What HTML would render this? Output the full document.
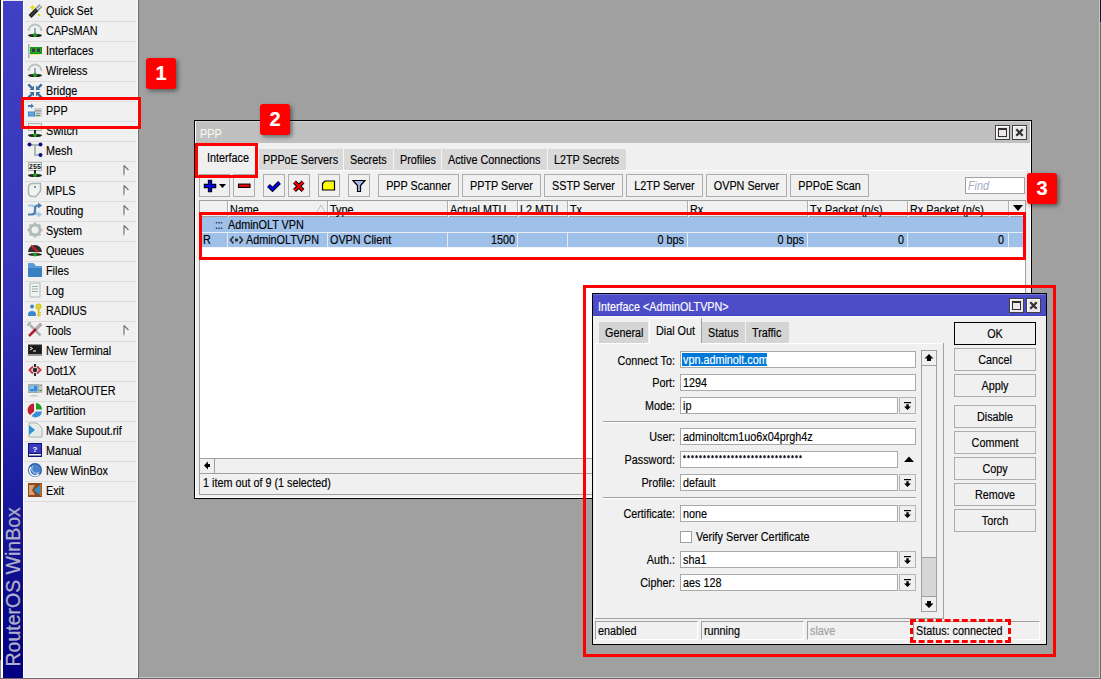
<!DOCTYPE html><html><head><meta charset="utf-8"><style>
*{box-sizing:border-box;margin:0;padding:0}
html,body{width:1101px;height:679px;overflow:hidden;background:#a0a0a0}
body{position:relative;font-family:"Liberation Sans", sans-serif;font-size:12px;color:#000;letter-spacing:0px;-webkit-text-stroke:0.15px currentColor}
.a{position:absolute}
.t{position:absolute;white-space:nowrap;line-height:13px;transform:scaleX(0.9);transform-origin:0 0}
.tr{transform-origin:100% 0}
.btn{position:absolute;background:#f0f0f0;border:1px solid #adadad}
.bt{position:absolute;left:0;right:0;text-align:center;white-space:nowrap;line-height:13px;transform:scaleX(0.9)}
.fld{position:absolute;background:#fff;border:1px solid #a9a9a9}
.dd{position:absolute;background:#f0f0f0;border:1px solid #b4b4b4}
.red{position:absolute;border:3px solid #ff0000}
.badge{position:absolute;width:30px;height:31px;background:#ff0000;border-radius:3px;box-shadow:2px 2px 4px rgba(0,0,0,0.45);color:#fff;font-weight:bold;font-size:20px;text-align:center;line-height:31px}
</style></head><body>
<div class="a" style="left:0;top:0;width:1px;height:679px;background:#181818"></div>
<div class="a" style="left:0;top:660px;width:1px;height:19px;background:#808080"></div>
<div class="a" style="left:1px;top:0;width:2px;height:678px;background:#fffff8"></div>
<div class="a" style="left:3px;top:1px;width:20px;height:677px;background:linear-gradient(#4040c4,#3434b8 45%,#000080)"></div>
<div class="a" style="left:3px;top:0;width:20px;height:1px;background:#e8e8f0"></div>
<div class="a" style="left:23px;top:0;width:1px;height:678px;background:#fffff8"></div>
<div class="a" style="left:24px;top:0;width:113px;height:678px;background:#f0f0f0"></div>
<div class="a" style="left:137px;top:0;width:1px;height:678px;background:#fafafa"></div>
<div class="a" style="left:138px;top:0;width:1px;height:679px;background:#6e6e6e"></div>
<div class="a" style="left:24px;top:677px;width:113px;height:1px;background:#fafafa"></div>
<div class="a" style="left:139px;top:677px;width:961px;height:1px;background:#c4c4c4"></div>
<div class="a" style="left:1099px;top:0;width:1px;height:678px;background:#c4c4c4"></div>
<div class="a" style="left:1100px;top:0;width:1px;height:679px;background:#6a6a6a"></div>
<div class="a" style="left:1100px;top:0;width:1px;height:22px;background:#16162a"></div>
<div class="a" style="left:0;top:678px;width:1101px;height:1px;background:#6a6a6a"></div>
<svg style="position:absolute;left:0px;top:0px;" width="24" height="679" viewBox="0 0 24 679"><text transform="translate(19.8,666.5) rotate(-90)" font-family="Liberation Sans" font-size="19.5" fill="#000030" opacity="0.6" x="0" y="1.5">RouterOS WinBox</text><text transform="translate(19.8,666.5) rotate(-90)" font-family="Liberation Sans" font-size="19.5" fill="#b0b0d0" stroke="#b0b0d0" stroke-width="0.3">RouterOS WinBox</text></svg>
<div class="a" style="left:25px;top:21px;width:111px;height:1px;background:#dcdcdc"></div>
<svg style="position:absolute;left:27px;top:2px;" width="16" height="16" viewBox="0 0 16 16"><path d="M3 14.5L10 7.5" stroke="#202020" stroke-width="4"/><path d="M3 14.5L10 7.5" stroke="#404040" stroke-width="1.5"/>
<path d="M10 7.5L13.8 3.7" stroke="#8a8a8a" stroke-width="4"/><path d="M10 7.5L13.8 3.7" stroke="#d8d8d8" stroke-width="1.6"/>
<path d="M5.5 2.5l1 2 2 1-2 1-1 2-1-2-2-1 2-1z" fill="#e0dc10"/>
<rect x="11" y="12" width="2.2" height="2.2" fill="#e0dc10"/></svg>
<div class="t" style="left:46px;top:5px">Quick Set</div>
<div class="a" style="left:25px;top:41px;width:111px;height:1px;background:#dcdcdc"></div>
<svg style="position:absolute;left:27px;top:22px;" width="16" height="16" viewBox="0 0 16 16"><path d="M1.5 9 A6.5 6.5 0 0 1 14.5 9" fill="none" stroke="#b8c4c0" stroke-width="2"/>
<rect x="7" y="6" width="2" height="7" fill="#9aaaa6"/>
<ellipse cx="8" cy="13.5" rx="7" ry="1.6" fill="#222"/>
<circle cx="8" cy="13" r="2" fill="#20a020"/></svg>
<div class="t" style="left:46px;top:25px">CAPsMAN</div>
<div class="a" style="left:25px;top:61px;width:111px;height:1px;background:#dcdcdc"></div>
<svg style="position:absolute;left:27px;top:42px;" width="16" height="16" viewBox="0 0 16 16"><rect x="1" y="2" width="1.6" height="14" fill="#a4b0ac"/>
<rect x="3" y="5" width="12" height="7" fill="#109010"/><rect x="3.5" y="5.5" width="11" height="6" fill="#20a820"/>
<rect x="5" y="6.5" width="3" height="3.5" fill="#383848"/><rect x="10" y="6.5" width="3" height="3.5" fill="#383848"/>
<path d="M4 12.5H14" stroke="#e8d820" stroke-width="1.2" stroke-dasharray="1 1"/></svg>
<div class="t" style="left:46px;top:45px">Interfaces</div>
<div class="a" style="left:25px;top:81px;width:111px;height:1px;background:#dcdcdc"></div>
<svg style="position:absolute;left:27px;top:62px;" width="16" height="16" viewBox="0 0 16 16"><path d="M1.5 9 A6.5 6.5 0 0 1 14.5 9" fill="none" stroke="#b8c4c0" stroke-width="2"/>
<rect x="7" y="6" width="2" height="7" fill="#9aaaa6"/>
<ellipse cx="8" cy="13.5" rx="7" ry="1.6" fill="#222"/>
<circle cx="8" cy="13" r="2" fill="#20a020"/></svg>
<div class="t" style="left:46px;top:65px">Wireless</div>
<div class="a" style="left:25px;top:101px;width:111px;height:1px;background:#dcdcdc"></div>
<svg style="position:absolute;left:27px;top:82px;" width="16" height="16" viewBox="0 0 16 16"><g fill="#3a6e9e"><path d="M7 8V3.5L2.5 8z"/><path d="M9 8V3.5L13.5 8z"/><path d="M7 10V14.5L2.5 10z"/><path d="M9 10V14.5L13.5 10z"/></g>
<g stroke="#3a6e9e" stroke-width="2.4"><path d="M1.3 2.3L5 6M14.7 2.3L11 6M1.3 15.7L5 12M14.7 15.7L11 12"/></g></svg>
<div class="t" style="left:46px;top:85px">Bridge</div>
<div class="a" style="left:25px;top:121px;width:111px;height:1px;background:#dcdcdc"></div>
<svg style="position:absolute;left:27px;top:102px;" width="16" height="16" viewBox="0 0 16 16"><path d="M1 4h4" stroke="#4a7eb0" stroke-width="2"/><path d="M4 1.5l3 2.5-3 2.5z" fill="#4a7eb0"/>
<rect x="7" y="6" width="8" height="9" fill="#cfcfcf"/><rect x="8" y="8" width="6" height="1.5" fill="#a0a0a0"/>
<rect x="9" y="11" width="4" height="1" fill="#a0a0a0"/><rect x="9" y="13" width="4" height="1" fill="#20b020"/>
<rect x="1" y="9.5" width="7" height="5" fill="#3a88d0"/><rect x="2" y="10.5" width="5" height="3" fill="#6aa8e0"/></svg>
<div class="t" style="left:46px;top:105px">PPP</div>
<div class="a" style="left:25px;top:141px;width:111px;height:1px;background:#dcdcdc"></div>
<svg style="position:absolute;left:27px;top:122px;" width="16" height="16" viewBox="0 0 16 16"><rect x="1.5" y="1.5" width="13" height="7" fill="#e8eeec" stroke="#a8b4b0"/>
<rect x="7" y="8" width="2" height="5" fill="#222"/>
<ellipse cx="8" cy="13.5" rx="7" ry="1.6" fill="#222"/>
<circle cx="8" cy="13" r="2" fill="#20a020"/></svg>
<div class="t" style="left:46px;top:125px">Switch</div>
<div class="a" style="left:25px;top:161px;width:111px;height:1px;background:#dcdcdc"></div>
<svg style="position:absolute;left:27px;top:142px;" width="16" height="16" viewBox="0 0 16 16"><path d="M3 3H13M8 3V13H13" fill="none" stroke="#a8b8b4" stroke-width="2"/>
<circle cx="2.5" cy="2.5" r="2" fill="#101080"/><circle cx="13.5" cy="2.5" r="2" fill="#101080"/><circle cx="13.5" cy="13" r="2" fill="#101080"/></svg>
<div class="t" style="left:46px;top:145px">Mesh</div>
<div class="a" style="left:25px;top:181px;width:111px;height:1px;background:#dcdcdc"></div>
<svg style="position:absolute;left:27px;top:162px;" width="16" height="16" viewBox="0 0 16 16"><rect x="1.5" y="0.5" width="13" height="8" fill="#f4f4f4" stroke="#a8b4b0"/>
<text x="8" y="7.3" font-family="Liberation Mono" font-size="7" font-weight="bold" text-anchor="middle" fill="#111">255</text>
<rect x="7" y="8" width="2" height="5" fill="#222"/>
<ellipse cx="8" cy="13.5" rx="7" ry="1.6" fill="#222"/>
<circle cx="8" cy="13" r="2" fill="#20a020"/></svg>
<div class="t" style="left:46px;top:165px">IP</div>
<svg style="position:absolute;left:121px;top:164px;" width="10" height="14" viewBox="0 0 10 14"><path d="M3 1.5V11.5M3 1.5L7.5 6.2" fill="none" stroke="#6a6a6a" stroke-width="1.1"/><path d="M7.5 6.8L3 11.5" fill="none" stroke="#ffffff" stroke-width="1"/></svg>
<div class="a" style="left:25px;top:201px;width:111px;height:1px;background:#dcdcdc"></div>
<svg style="position:absolute;left:27px;top:182px;" width="16" height="16" viewBox="0 0 16 16"><path d="M5 1.5H13.5V9L9 14.5H5A4 4 0 0 1 1.5 10.5V5A4 4 0 0 1 5 1.5z" fill="#eef2f0" stroke="#a8b8b4" stroke-width="1.5"/>
<circle cx="8" cy="5" r="1" fill="#607070"/></svg>
<div class="t" style="left:46px;top:185px">MPLS</div>
<svg style="position:absolute;left:121px;top:184px;" width="10" height="14" viewBox="0 0 10 14"><path d="M3 1.5V11.5M3 1.5L7.5 6.2" fill="none" stroke="#6a6a6a" stroke-width="1.1"/><path d="M7.5 6.8L3 11.5" fill="none" stroke="#ffffff" stroke-width="1"/></svg>
<div class="a" style="left:25px;top:221px;width:111px;height:1px;background:#dcdcdc"></div>
<svg style="position:absolute;left:27px;top:202px;" width="16" height="16" viewBox="0 0 16 16"><path d="M1 3.5h4c2 0 3 1.5 3 3.5v2c0 2 1 3.5 3 3.5h1" fill="none" stroke="#a0c8e8" stroke-width="2.2"/>
<path d="M1 12.5h4c2 0 3-1.5 3-3.5v-2c0-2 1-3.5 3-3.5h1" fill="none" stroke="#4a7eb0" stroke-width="2.2"/>
<path d="M11 0.5l4 3-4 3z" fill="#4a7eb0"/><path d="M11 9.5l4 3-4 3z" fill="#a0c8e8"/></svg>
<div class="t" style="left:46px;top:205px">Routing</div>
<svg style="position:absolute;left:121px;top:204px;" width="10" height="14" viewBox="0 0 10 14"><path d="M3 1.5V11.5M3 1.5L7.5 6.2" fill="none" stroke="#6a6a6a" stroke-width="1.1"/><path d="M7.5 6.8L3 11.5" fill="none" stroke="#ffffff" stroke-width="1"/></svg>
<div class="a" style="left:25px;top:241px;width:111px;height:1px;background:#dcdcdc"></div>
<svg style="position:absolute;left:27px;top:222px;" width="16" height="16" viewBox="0 0 16 16"><circle cx="8" cy="8" r="5" fill="none" stroke="#b0bcb8" stroke-width="3"/>
<g stroke="#b0bcb8" stroke-width="2.5"><path d="M8 0.5V3M8 13V15.5M0.5 8H3M13 8H15.5M2.7 2.7L4.5 4.5M11.5 11.5L13.3 13.3M13.3 2.7L11.5 4.5M4.5 11.5L2.7 13.3"/></g></svg>
<div class="t" style="left:46px;top:225px">System</div>
<svg style="position:absolute;left:121px;top:224px;" width="10" height="14" viewBox="0 0 10 14"><path d="M3 1.5V11.5M3 1.5L7.5 6.2" fill="none" stroke="#6a6a6a" stroke-width="1.1"/><path d="M7.5 6.8L3 11.5" fill="none" stroke="#ffffff" stroke-width="1"/></svg>
<div class="a" style="left:25px;top:261px;width:111px;height:1px;background:#dcdcdc"></div>
<svg style="position:absolute;left:27px;top:242px;" width="16" height="16" viewBox="0 0 16 16"><path d="M1 10A7 7 0 0 1 15 10z" fill="#303030"/>
<path d="M4 3.5L11 10" stroke="#d02020" stroke-width="2.2"/>
<ellipse cx="8" cy="12.5" rx="7" ry="1.4" fill="#222"/>
<circle cx="8" cy="12.5" r="2" fill="#20a020"/></svg>
<div class="t" style="left:46px;top:245px">Queues</div>
<div class="a" style="left:25px;top:281px;width:111px;height:1px;background:#dcdcdc"></div>
<svg style="position:absolute;left:27px;top:262px;" width="16" height="16" viewBox="0 0 16 16"><path d="M1 1H6L9 4H15V15H1z" fill="#3a80c0"/><path d="M8 4.5h6.5v1H8z" fill="#e0f0ff"/><path d="M1 1H6L9 4H15V6H1z" fill="#5a9ad8"/></svg>
<div class="t" style="left:46px;top:265px">Files</div>
<div class="a" style="left:25px;top:301px;width:111px;height:1px;background:#dcdcdc"></div>
<svg style="position:absolute;left:27px;top:282px;" width="16" height="16" viewBox="0 0 16 16"><path d="M3 1H13V15H3z" fill="#eef2f0" stroke="#b0bcb8"/>
<g stroke="#a0aca8"><path d="M5 4.5H11M5 7H11M5 9.5H11"/></g></svg>
<div class="t" style="left:46px;top:285px">Log</div>
<div class="a" style="left:25px;top:321px;width:111px;height:1px;background:#dcdcdc"></div>
<svg style="position:absolute;left:27px;top:302px;" width="16" height="16" viewBox="0 0 16 16"><circle cx="5" cy="4.5" r="2" fill="#3a88d0"/><path d="M1 13A4 4 0 0 1 9 13V14H1z" fill="#3a88d0"/>
<circle cx="11.5" cy="4.5" r="3" fill="#d8c820"/><rect x="10.5" y="6" width="2" height="8.5" fill="#d8c820"/>
<rect x="12" y="10" width="2" height="1.2" fill="#d8c820"/><rect x="12" y="12.5" width="2" height="1.2" fill="#d8c820"/><rect x="10.5" y="3.8" width="2" height="1" fill="#f4f0a0"/></svg>
<div class="t" style="left:46px;top:305px">RADIUS</div>
<div class="a" style="left:25px;top:341px;width:111px;height:1px;background:#dcdcdc"></div>
<svg style="position:absolute;left:27px;top:322px;" width="16" height="16" viewBox="0 0 16 16"><path d="M3 3L13.5 13.5" stroke="#a8b4b0" stroke-width="2.5"/>
<path d="M14 2L2 14" stroke="#b02030" stroke-width="2.5"/>
<path d="M9 7L14 2" stroke="#a8b4b0" stroke-width="2.5"/>
<path d="M1 4A3 3 0 0 1 4 1" stroke="#a8b4b0" stroke-width="2" fill="none"/></svg>
<div class="t" style="left:46px;top:325px">Tools</div>
<svg style="position:absolute;left:121px;top:324px;" width="10" height="14" viewBox="0 0 10 14"><path d="M3 1.5V11.5M3 1.5L7.5 6.2" fill="none" stroke="#6a6a6a" stroke-width="1.1"/><path d="M7.5 6.8L3 11.5" fill="none" stroke="#ffffff" stroke-width="1"/></svg>
<div class="a" style="left:25px;top:361px;width:111px;height:1px;background:#dcdcdc"></div>
<svg style="position:absolute;left:27px;top:342px;" width="16" height="16" viewBox="0 0 16 16"><rect x="1" y="2.5" width="14" height="10" fill="#303030"/><rect x="2" y="3.5" width="12" height="8" fill="#1a1a1a"/>
<path d="M3 5L5.5 6.5L3 8" stroke="#fff" fill="none" stroke-width="1"/><rect x="6" y="8.5" width="3" height="1" fill="#fff"/>
<rect x="0.5" y="13" width="15" height="1" fill="#a0a0a0"/></svg>
<div class="t" style="left:46px;top:345px">New Terminal</div>
<div class="a" style="left:25px;top:381px;width:111px;height:1px;background:#dcdcdc"></div>
<svg style="position:absolute;left:27px;top:362px;" width="16" height="16" viewBox="0 0 16 16"><path d="M6 4.5L2.5 8L6 11.5" fill="none" stroke="#c83848" stroke-width="2"/><path d="M10 4.5L13.5 8L10 11.5" fill="none" stroke="#c83848" stroke-width="2"/>
<circle cx="8" cy="8" r="2.3" fill="#282828"/><rect x="7" y="2" width="2" height="3" fill="#282828"/><rect x="7" y="11" width="2" height="3" fill="#282828"/></svg>
<div class="t" style="left:46px;top:365px">Dot1X</div>
<div class="a" style="left:25px;top:401px;width:111px;height:1px;background:#dcdcdc"></div>
<svg style="position:absolute;left:27px;top:382px;" width="16" height="16" viewBox="0 0 16 16"><rect x="1.5" y="2.5" width="10" height="8" fill="#d0d8d8" stroke="#a0acac"/><rect x="2.5" y="3.5" width="8" height="6" fill="#3a88d8"/><rect x="3" y="4" width="4" height="3" fill="#80bff0"/>
<rect x="12" y="2" width="3.5" height="9" fill="#c4c8c8"/><rect x="12.5" y="3" width="2.5" height="1" fill="#909898"/><rect x="12.5" y="8" width="2.5" height="1.2" fill="#20a020"/>
<path d="M2 14.5C4 12 10 12 12 14.5z" fill="#c8cccc"/></svg>
<div class="t" style="left:46px;top:385px">MetaROUTER</div>
<div class="a" style="left:25px;top:421px;width:111px;height:1px;background:#dcdcdc"></div>
<svg style="position:absolute;left:27px;top:402px;" width="16" height="16" viewBox="0 0 16 16"><path d="M7 1.5A6.5 6.5 0 0 0 3 13L7 9.5z" fill="#c02030"/>
<path d="M9 1A6.5 6.5 0 0 1 15 7.5H9z" fill="#20a020"/>
<path d="M15 9.5A6.5 6.5 0 0 1 4.5 14L9 9.5z" fill="#3a90d8"/></svg>
<div class="t" style="left:46px;top:405px">Partition</div>
<div class="a" style="left:25px;top:441px;width:111px;height:1px;background:#dcdcdc"></div>
<svg style="position:absolute;left:27px;top:422px;" width="16" height="16" viewBox="0 0 16 16"><path d="M2 1H10L15 6V15H2z" fill="#e4ecea" stroke="#a8b4b0"/>
<path d="M2 3L8 8L2 13z" fill="#2a90d8"/></svg>
<div class="t" style="left:46px;top:425px">Make Supout.rif</div>
<div class="a" style="left:25px;top:461px;width:111px;height:1px;background:#dcdcdc"></div>
<svg style="position:absolute;left:27px;top:442px;" width="16" height="16" viewBox="0 0 16 16"><rect x="1" y="1" width="14" height="14" fill="#10107a"/><rect x="2" y="2" width="12" height="9" fill="#3a3ac0"/>
<text x="8" y="9.5" font-family="Liberation Sans" font-size="8" font-weight="bold" text-anchor="middle" fill="#fff">?</text>
<rect x="2" y="12" width="12" height="1.5" fill="#fff"/></svg>
<div class="t" style="left:46px;top:445px">Manual</div>
<div class="a" style="left:25px;top:481px;width:111px;height:1px;background:#dcdcdc"></div>
<svg style="position:absolute;left:27px;top:462px;" width="16" height="16" viewBox="0 0 16 16"><circle cx="8" cy="8" r="7" fill="#2a60a8"/><circle cx="8" cy="8" r="5.8" fill="#4a80c8"/>
<path d="M4 5A5 5 0 0 0 12 12" fill="none" stroke="#fff" stroke-width="1.3"/><path d="M6 4A4 4 0 0 0 12 10" fill="none" stroke="#dde" stroke-width="0.8"/></svg>
<div class="t" style="left:46px;top:465px">New WinBox</div>
<div class="a" style="left:25px;top:501px;width:111px;height:1px;background:#dcdcdc"></div>
<svg style="position:absolute;left:27px;top:482px;" width="16" height="16" viewBox="0 0 16 16"><rect x="1" y="1" width="14" height="14" fill="#8a4a20"/><path d="M2 3H8L5 8L8 13H2z" fill="#d8a070"/>
<path d="M13 3V13L7 8z" fill="#2a90d8"/><rect x="13" y="2" width="1.5" height="12" fill="#c07030"/></svg>
<div class="t" style="left:46px;top:485px">Exit</div>
<div class="a" style="left:194px;top:120px;width:838px;height:379px;background:#000;"></div>
<div class="a" style="left:195px;top:121px;width:836px;height:377px;background:#ffffff;"></div>
<div class="a" style="left:196px;top:122px;width:834px;height:375px;background:#f0f0f0;"></div>
<div class="a" style="left:196px;top:122px;width:834px;height:21px;background:#c0c0c0;"></div>
<div class="a" style="left:196px;top:121px;width:834px;height:1px;background:#d4d4d4;"></div>
<div class="t" style="left:200px;top:128px;color:#f8f8f0">PPP</div>
<div class="a" style="left:995px;top:125px;width:15px;height:15px;background:#404040;"></div><div class="a" style="left:996px;top:126px;width:13px;height:13px;background:#ffffff;"></div><div class="a" style="left:997px;top:127px;width:12px;height:12px;background:#ebe7eb;"></div><svg style="position:absolute;left:995px;top:125px;" width="15" height="15" viewBox="0 0 15 15"><rect x="3.5" y="3.5" width="8" height="8" fill="none" stroke="#303030"/><rect x="3" y="3" width="9" height="2" fill="#303030"/></svg><div class="a" style="left:1012px;top:125px;width:15px;height:15px;background:#404040;"></div><div class="a" style="left:1013px;top:126px;width:13px;height:13px;background:#ffffff;"></div><div class="a" style="left:1014px;top:127px;width:12px;height:12px;background:#ebe7eb;"></div><svg style="position:absolute;left:1012px;top:125px;" width="15" height="15" viewBox="0 0 15 15"><path d="M4.3 4.3L10.7 10.7M10.7 4.3L4.3 10.7" stroke="#303030" stroke-width="2.2"/></svg>
<div class="a" style="left:196px;top:170px;width:834px;height:1px;background:#ffffff;"></div>
<div class="a" style="left:258px;top:149px;width:85px;height:21px;background:#d9d9d9;"></div>
<div class="a" style="left:258px;top:149px;width:1px;height:21px;background:#f4f4f4;"></div>
<div class="t" style="left:263px;top:154px;">PPPoE Servers</div>
<div class="a" style="left:343px;top:149px;width:50px;height:21px;background:#d9d9d9;"></div>
<div class="a" style="left:343px;top:149px;width:1px;height:21px;background:#f4f4f4;"></div>
<div class="t" style="left:350px;top:154px;">Secrets</div>
<div class="a" style="left:393px;top:149px;width:48px;height:21px;background:#d9d9d9;"></div>
<div class="a" style="left:393px;top:149px;width:1px;height:21px;background:#f4f4f4;"></div>
<div class="t" style="left:400px;top:154px;">Profiles</div>
<div class="a" style="left:441px;top:149px;width:106px;height:21px;background:#d9d9d9;"></div>
<div class="a" style="left:441px;top:149px;width:1px;height:21px;background:#f4f4f4;"></div>
<div class="t" style="left:448px;top:154px;">Active Connections</div>
<div class="a" style="left:547px;top:149px;width:79px;height:21px;background:#d9d9d9;"></div>
<div class="a" style="left:547px;top:149px;width:1px;height:21px;background:#f4f4f4;"></div>
<div class="t" style="left:554px;top:154px;">L2TP Secrets</div>
<div class="a" style="left:196px;top:144px;width:62px;height:31px;background:#f0f0f0;"></div>
<div class="a" style="left:196px;top:144px;width:62px;height:1px;background:#ffffff;"></div>
<div class="t" style="left:207px;top:152px;">Interface</div>
<div class="btn" style="left:199px;top:174px;width:31px;height:23px;border-color:#adadad"></div>
<svg style="position:absolute;left:199px;top:174px;" width="31" height="23" viewBox="0 0 31 23"><path d="M9.4 6.3h3.2v4.1h4.1v3.2h-4.1v4.1h-3.2v-4.1h-4.1v-3.2h4.1z" fill="#0000ff" stroke="#000" stroke-width="1.1"/><path d="M20 10h7l-3.5 4z" fill="#000"/></svg>
<div class="btn" style="left:233px;top:174px;width:22px;height:23px;border-color:#adadad"></div>
<svg style="position:absolute;left:233px;top:174px;" width="22" height="23" viewBox="0 0 22 23"><rect x="5.5" y="10.1" width="11.5" height="3.3" fill="#ff0000" stroke="#000" stroke-width="1.1"/></svg>
<div class="btn" style="left:263px;top:174px;width:22px;height:23px;border-color:#adadad"></div>
<svg style="position:absolute;left:263px;top:174px;" width="22" height="23" viewBox="0 0 22 23"><path d="M5.5 11.5L9.5 15.5L16.5 8.5" fill="none" stroke="#000" stroke-width="4"/><path d="M5.5 11.5L9.5 15.5L16.5 8.5" fill="none" stroke="#0000ff" stroke-width="2"/></svg>
<div class="btn" style="left:288px;top:174px;width:22px;height:23px;border-color:#adadad"></div>
<svg style="position:absolute;left:288px;top:174px;" width="22" height="23" viewBox="0 0 22 23"><path d="M6.5 8L15 16.5M15 8L6.5 16.5" fill="none" stroke="#000" stroke-width="4"/><path d="M6.5 8L15 16.5M15 8L6.5 16.5" fill="none" stroke="#ff0000" stroke-width="2"/></svg>
<div class="btn" style="left:318px;top:174px;width:22px;height:23px;border-color:#adadad"></div>
<svg style="position:absolute;left:318px;top:174px;" width="22" height="23" viewBox="0 0 22 23"><path d="M4.5 9.5l2.5-2.5h9.5v9h-12z" fill="#ffff00" stroke="#000" stroke-width="1.2"/><path d="M10 9.5h2M13 9.5h2" stroke="#ccc" stroke-width="0.8"/></svg>
<div class="btn" style="left:348px;top:174px;width:22px;height:23px;border-color:#adadad"></div>
<svg style="position:absolute;left:348px;top:174px;" width="22" height="23" viewBox="0 0 22 23"><path d="M5 6.5h12l-4.5 5v6h-3v-6z" fill="#a8b8e8" stroke="#000" stroke-width="1.2"/></svg>
<div class="btn" style="left:378px;top:174px;width:81px;height:23px;border-color:#adadad"><div class="bt" style="top:5px">PPP Scanner</div></div>
<div class="btn" style="left:462px;top:174px;width:79px;height:23px;border-color:#adadad"><div class="bt" style="top:5px">PPTP Server</div></div>
<div class="btn" style="left:544px;top:174px;width:79px;height:23px;border-color:#adadad"><div class="bt" style="top:5px">SSTP Server</div></div>
<div class="btn" style="left:626px;top:174px;width:77px;height:23px;border-color:#adadad"><div class="bt" style="top:5px">L2TP Server</div></div>
<div class="btn" style="left:706px;top:174px;width:81px;height:23px;border-color:#adadad"><div class="bt" style="top:5px">OVPN Server</div></div>
<div class="btn" style="left:790px;top:174px;width:79px;height:23px;border-color:#adadad"><div class="bt" style="top:5px">PPPoE Scan</div></div>
<div class="fld" style="left:965px;top:177px;width:60px;height:17px;border-color:#a0a0a0"></div>
<div class="t" style="left:968px;top:180px;color:#a4aac6;font-style:italic;font-size:12px;letter-spacing:0;-webkit-text-stroke:0">Find</div>
<div class="a" style="left:199px;top:200px;width:827px;height:259px;background:#a0a0a0;"></div>
<div class="a" style="left:200px;top:201px;width:825px;height:257px;background:#ffffff;"></div>
<div class="a" style="left:200px;top:201px;width:825px;height:16px;background:#f0f0f0;"></div>
<div class="a" style="left:200px;top:216px;width:825px;height:1px;background:#a0a0a0;"></div>
<div class="a" style="left:1027px;top:170px;width:1px;height:30px;background:#d8d8d8;"></div>
<div class="a" style="left:227px;top:201px;width:1px;height:16px;background:#b0b0b0;"></div>
<div class="a" style="left:228px;top:201px;width:1px;height:16px;background:#ffffff;"></div>
<div class="a" style="left:327px;top:201px;width:1px;height:16px;background:#b0b0b0;"></div>
<div class="a" style="left:328px;top:201px;width:1px;height:16px;background:#ffffff;"></div>
<div class="a" style="left:447px;top:201px;width:1px;height:16px;background:#b0b0b0;"></div>
<div class="a" style="left:448px;top:201px;width:1px;height:16px;background:#ffffff;"></div>
<div class="a" style="left:517px;top:201px;width:1px;height:16px;background:#b0b0b0;"></div>
<div class="a" style="left:518px;top:201px;width:1px;height:16px;background:#ffffff;"></div>
<div class="a" style="left:567px;top:201px;width:1px;height:16px;background:#b0b0b0;"></div>
<div class="a" style="left:568px;top:201px;width:1px;height:16px;background:#ffffff;"></div>
<div class="a" style="left:687px;top:201px;width:1px;height:16px;background:#b0b0b0;"></div>
<div class="a" style="left:688px;top:201px;width:1px;height:16px;background:#ffffff;"></div>
<div class="a" style="left:807px;top:201px;width:1px;height:16px;background:#b0b0b0;"></div>
<div class="a" style="left:808px;top:201px;width:1px;height:16px;background:#ffffff;"></div>
<div class="a" style="left:907px;top:201px;width:1px;height:16px;background:#b0b0b0;"></div>
<div class="a" style="left:908px;top:201px;width:1px;height:16px;background:#ffffff;"></div>
<div class="a" style="left:1008px;top:201px;width:1px;height:16px;background:#b0b0b0;"></div>
<div class="a" style="left:1009px;top:201px;width:1px;height:16px;background:#ffffff;"></div>
<div class="t" style="left:230px;top:204px;">Name</div>
<div class="t" style="left:330px;top:204px;">Type</div>
<div class="t" style="left:450px;top:204px;">Actual MTU</div>
<div class="t" style="left:520px;top:204px;">L2 MTU</div>
<div class="t" style="left:570px;top:204px;">Tx</div>
<div class="t" style="left:690px;top:204px;">Rx</div>
<div class="t" style="left:810px;top:204px;">Tx Packet (p/s)</div>
<div class="t" style="left:910px;top:204px;">Rx Packet (p/s)</div>
<svg style="position:absolute;left:316px;top:204px;" width="10" height="9" viewBox="0 0 10 9"><path d="M1 8L5 1L9 8" fill="none" stroke="#c0c0c0" stroke-width="1"/></svg>
<svg style="position:absolute;left:1012px;top:203px;" width="12" height="10" viewBox="0 0 12 10"><path d="M1 2h10l-5 6z" fill="#000"/></svg>
<div class="a" style="left:200px;top:217px;width:824px;height:15px;background:#9fc1e9;"></div>
<div class="a" style="left:200px;top:232px;width:824px;height:1px;background:#e8eef4;"></div>
<div class="a" style="left:200px;top:233px;width:824px;height:14px;background:#9fc1e9;"></div>
<div class="a" style="left:200px;top:247px;width:824px;height:1px;background:#f0f4f8;"></div>
<div class="t" style="left:215px;top:219px;color:#202040;letter-spacing:-0.5px">:::</div>
<div class="t" style="left:228px;top:219px;">AdminOLT VPN</div>
<div class="a" style="left:227px;top:233px;width:1px;height:14px;background:#e4eaf0;"></div>
<div class="a" style="left:327px;top:233px;width:1px;height:14px;background:#e4eaf0;"></div>
<div class="a" style="left:447px;top:233px;width:1px;height:14px;background:#e4eaf0;"></div>
<div class="a" style="left:517px;top:233px;width:1px;height:14px;background:#e4eaf0;"></div>
<div class="a" style="left:567px;top:233px;width:1px;height:14px;background:#e4eaf0;"></div>
<div class="a" style="left:687px;top:233px;width:1px;height:14px;background:#e4eaf0;"></div>
<div class="a" style="left:807px;top:233px;width:1px;height:14px;background:#e4eaf0;"></div>
<div class="a" style="left:907px;top:233px;width:1px;height:14px;background:#e4eaf0;"></div>
<div class="a" style="left:1008px;top:233px;width:1px;height:14px;background:#e4eaf0;"></div>
<div class="t" style="left:203px;top:234px;">R</div>
<svg style="position:absolute;left:229px;top:235px;" width="15" height="10" viewBox="0 0 15 10"><path d="M4.5 1.5L1.5 5 4.5 8.5M10.5 1.5L13.5 5 10.5 8.5" fill="none" stroke="#303030" stroke-width="1.6"/><circle cx="7.5" cy="5" r="1.8" fill="#303030"/></svg>
<div class="t" style="left:246px;top:234px;">AdminOLTVPN</div>
<div class="t" style="left:330px;top:234px;">OVPN Client</div>
<div class="t tr" style="left:215px;width:300px;text-align:right;top:234px;">1500</div>
<div class="t tr" style="left:384px;width:300px;text-align:right;top:234px;">0 bps</div>
<div class="t tr" style="left:504px;width:300px;text-align:right;top:234px;">0 bps</div>
<div class="t tr" style="left:604px;width:300px;text-align:right;top:234px;">0</div>
<div class="t tr" style="left:704px;width:300px;text-align:right;top:234px;">0</div>
<div class="a" style="left:199px;top:458px;width:826px;height:1px;background:#a0a0a0;"></div>
<div class="a" style="left:199px;top:459px;width:826px;height:14px;background:#f0f0f0;"></div>
<div class="a" style="left:199px;top:459px;width:1px;height:14px;background:#a0a0a0;"></div>
<div class="a" style="left:214px;top:459px;width:1px;height:14px;background:#a0a0a0;"></div>
<svg style="position:absolute;left:203px;top:461px;" width="8" height="9" viewBox="0 0 8 9"><path d="M1 4.5L5 0.5V3h2v3H5v2.5z" fill="#000"/></svg>
<div class="a" style="left:199px;top:473px;width:826px;height:1px;background:#a0a0a0;"></div>
<div class="a" style="left:199px;top:474px;width:1px;height:21px;background:#a0a0a0;"></div>
<div class="a" style="left:199px;top:494px;width:826px;height:1px;background:#a0a0a0;"></div>
<div class="t" style="left:203px;top:477px;">1 item out of 9 (1 selected)</div>
<div class="a" style="left:592px;top:293px;width:455px;height:352px;background:#000;"></div>
<div class="a" style="left:593px;top:294px;width:453px;height:350px;background:#f0f0f0;"></div>
<div class="a" style="left:593px;top:294px;width:453px;height:22px;background:#4d4dc9;"></div>
<div class="a" style="left:593px;top:294px;width:453px;height:1px;background:#7474d8;"></div>
<div class="a" style="left:593px;top:315px;width:453px;height:1px;background:#4040c0;"></div>
<div class="a" style="left:593px;top:316px;width:453px;height:1px;background:#fafaf2;"></div>
<div class="t" style="left:598px;top:301px;color:#ffffff">Interface &lt;AdminOLTVPN&gt;</div>
<div class="a" style="left:1009px;top:298px;width:15px;height:15px;background:#404040;"></div><div class="a" style="left:1010px;top:299px;width:13px;height:13px;background:#ffffff;"></div><div class="a" style="left:1011px;top:300px;width:12px;height:12px;background:#ebe7eb;"></div><svg style="position:absolute;left:1009px;top:298px;" width="15" height="15" viewBox="0 0 15 15"><rect x="3.5" y="3.5" width="8" height="8" fill="none" stroke="#303030"/><rect x="3" y="3" width="9" height="2" fill="#303030"/></svg><div class="a" style="left:1026px;top:298px;width:15px;height:15px;background:#404040;"></div><div class="a" style="left:1027px;top:299px;width:13px;height:13px;background:#ffffff;"></div><div class="a" style="left:1028px;top:300px;width:12px;height:12px;background:#ebe7eb;"></div><svg style="position:absolute;left:1026px;top:298px;" width="15" height="15" viewBox="0 0 15 15"><path d="M4.3 4.3L10.7 10.7M10.7 4.3L4.3 10.7" stroke="#303030" stroke-width="2.2"/></svg>
<div class="a" style="left:599px;top:322px;width:49px;height:21px;background:#d4d4d4;"></div>
<div class="t" style="left:605px;top:327px;">General</div>
<div class="a" style="left:702px;top:322px;width:43px;height:21px;background:#d4d4d4;"></div>
<div class="t" style="left:708px;top:327px;">Status</div>
<div class="a" style="left:746px;top:322px;width:43px;height:21px;background:#d4d4d4;"></div>
<div class="t" style="left:752px;top:327px;">Traffic</div>
<div class="a" style="left:649px;top:318px;width:53px;height:26px;background:#f0f0f0;"></div>
<div class="a" style="left:649px;top:318px;width:53px;height:1px;background:#ffffff;"></div>
<div class="a" style="left:649px;top:318px;width:1px;height:26px;background:#ffffff;"></div>
<div class="a" style="left:701px;top:318px;width:1px;height:25px;background:#a0a0a0;"></div>
<div class="t" style="left:656px;top:325px;">Dial Out</div>
<div class="a" style="left:595px;top:343px;width:349px;height:276px;background:#a0a0a0;"></div>
<div class="a" style="left:595px;top:343px;width:348px;height:275px;background:#ffffff;"></div>
<div class="a" style="left:596px;top:344px;width:347px;height:274px;background:#f0f0f0;"></div>
<div class="a" style="left:649px;top:343px;width:52px;height:1px;background:#f0f0f0;"></div>
<div class="t tr" style="left:375px;width:300px;text-align:right;top:355px;">Connect To:</div>
<div class="fld" style="left:680px;top:351px;width:236px;height:17px"></div>
<div class="a" style="left:682px;top:353px;width:85px;height:13px;background:#0078d7;"></div>
<div class="t" style="left:683px;top:354px;color:#fff">vpn.adminolt.com</div>
<div class="t tr" style="left:375px;width:300px;text-align:right;top:377px;">Port:</div><div class="fld" style="left:680px;top:374px;width:236px;height:17px"></div><div class="t" style="left:683px;top:377px;">1294</div>
<div class="t tr" style="left:375px;width:300px;text-align:right;top:400px;">Mode:</div><div class="fld" style="left:680px;top:397px;width:218px;height:17px"></div><div class="t" style="left:683px;top:400px;">ip</div><div class="dd" style="left:899px;top:397px;width:17px;height:17px"></div><svg style="position:absolute;left:899px;top:397px;" width="17" height="16" viewBox="0 0 17 16"><rect x="5" y="5" width="7" height="1.2" fill="#000"/><path d="M7.3 7.2h2.4v2.3h2.3l-3.5 3.6-3.5-3.6h2.3z" fill="#000"/></svg>
<div class="a" style="left:603px;top:421px;width:313px;height:1px;background:#a0a0a0;"></div>
<div class="a" style="left:603px;top:422px;width:313px;height:1px;background:#ffffff;"></div>
<div class="t tr" style="left:375px;width:300px;text-align:right;top:431px;">User:</div><div class="fld" style="left:680px;top:428px;width:236px;height:17px"></div><div class="t" style="left:683px;top:431px;">adminoltcm1uo6x04prgh4z</div>
<div class="t tr" style="left:375px;width:300px;text-align:right;top:454px;">Password:</div>
<div class="fld" style="left:680px;top:451px;width:218px;height:17px"></div>
<svg style="position:absolute;left:682px;top:454px;" width="130" height="8" viewBox="0 0 130 8"><path d="M2.50 1.2v3M1.20 2.7h2.6M1.50 1.7l2 2M3.50 1.7l-2 2" stroke="#101020" stroke-width="0.9"/><path d="M6.50 1.2v3M5.20 2.7h2.6M5.50 1.7l2 2M7.50 1.7l-2 2" stroke="#101020" stroke-width="0.9"/><path d="M10.50 1.2v3M9.20 2.7h2.6M9.50 1.7l2 2M11.50 1.7l-2 2" stroke="#101020" stroke-width="0.9"/><path d="M14.50 1.2v3M13.20 2.7h2.6M13.50 1.7l2 2M15.50 1.7l-2 2" stroke="#101020" stroke-width="0.9"/><path d="M18.50 1.2v3M17.20 2.7h2.6M17.50 1.7l2 2M19.50 1.7l-2 2" stroke="#101020" stroke-width="0.9"/><path d="M22.50 1.2v3M21.20 2.7h2.6M21.50 1.7l2 2M23.50 1.7l-2 2" stroke="#101020" stroke-width="0.9"/><path d="M26.50 1.2v3M25.20 2.7h2.6M25.50 1.7l2 2M27.50 1.7l-2 2" stroke="#101020" stroke-width="0.9"/><path d="M30.50 1.2v3M29.20 2.7h2.6M29.50 1.7l2 2M31.50 1.7l-2 2" stroke="#101020" stroke-width="0.9"/><path d="M34.50 1.2v3M33.20 2.7h2.6M33.50 1.7l2 2M35.50 1.7l-2 2" stroke="#101020" stroke-width="0.9"/><path d="M38.50 1.2v3M37.20 2.7h2.6M37.50 1.7l2 2M39.50 1.7l-2 2" stroke="#101020" stroke-width="0.9"/><path d="M42.50 1.2v3M41.20 2.7h2.6M41.50 1.7l2 2M43.50 1.7l-2 2" stroke="#101020" stroke-width="0.9"/><path d="M46.50 1.2v3M45.20 2.7h2.6M45.50 1.7l2 2M47.50 1.7l-2 2" stroke="#101020" stroke-width="0.9"/><path d="M50.50 1.2v3M49.20 2.7h2.6M49.50 1.7l2 2M51.50 1.7l-2 2" stroke="#101020" stroke-width="0.9"/><path d="M54.50 1.2v3M53.20 2.7h2.6M53.50 1.7l2 2M55.50 1.7l-2 2" stroke="#101020" stroke-width="0.9"/><path d="M58.50 1.2v3M57.20 2.7h2.6M57.50 1.7l2 2M59.50 1.7l-2 2" stroke="#101020" stroke-width="0.9"/><path d="M62.50 1.2v3M61.20 2.7h2.6M61.50 1.7l2 2M63.50 1.7l-2 2" stroke="#101020" stroke-width="0.9"/><path d="M66.50 1.2v3M65.20 2.7h2.6M65.50 1.7l2 2M67.50 1.7l-2 2" stroke="#101020" stroke-width="0.9"/><path d="M70.50 1.2v3M69.20 2.7h2.6M69.50 1.7l2 2M71.50 1.7l-2 2" stroke="#101020" stroke-width="0.9"/><path d="M74.50 1.2v3M73.20 2.7h2.6M73.50 1.7l2 2M75.50 1.7l-2 2" stroke="#101020" stroke-width="0.9"/><path d="M78.50 1.2v3M77.20 2.7h2.6M77.50 1.7l2 2M79.50 1.7l-2 2" stroke="#101020" stroke-width="0.9"/><path d="M82.50 1.2v3M81.20 2.7h2.6M81.50 1.7l2 2M83.50 1.7l-2 2" stroke="#101020" stroke-width="0.9"/><path d="M86.50 1.2v3M85.20 2.7h2.6M85.50 1.7l2 2M87.50 1.7l-2 2" stroke="#101020" stroke-width="0.9"/><path d="M90.50 1.2v3M89.20 2.7h2.6M89.50 1.7l2 2M91.50 1.7l-2 2" stroke="#101020" stroke-width="0.9"/><path d="M94.50 1.2v3M93.20 2.7h2.6M93.50 1.7l2 2M95.50 1.7l-2 2" stroke="#101020" stroke-width="0.9"/><path d="M98.50 1.2v3M97.20 2.7h2.6M97.50 1.7l2 2M99.50 1.7l-2 2" stroke="#101020" stroke-width="0.9"/><path d="M102.50 1.2v3M101.20 2.7h2.6M101.50 1.7l2 2M103.50 1.7l-2 2" stroke="#101020" stroke-width="0.9"/><path d="M106.50 1.2v3M105.20 2.7h2.6M105.50 1.7l2 2M107.50 1.7l-2 2" stroke="#101020" stroke-width="0.9"/><path d="M110.50 1.2v3M109.20 2.7h2.6M109.50 1.7l2 2M111.50 1.7l-2 2" stroke="#101020" stroke-width="0.9"/><path d="M114.50 1.2v3M113.20 2.7h2.6M113.50 1.7l2 2M115.50 1.7l-2 2" stroke="#101020" stroke-width="0.9"/><path d="M118.50 1.2v3M117.20 2.7h2.6M117.50 1.7l2 2M119.50 1.7l-2 2" stroke="#101020" stroke-width="0.9"/></svg>
<svg style="position:absolute;left:903px;top:455px;" width="12" height="8" viewBox="0 0 12 8"><path d="M1 7L6 1.5L11 7z" fill="#000"/></svg>
<div class="t tr" style="left:375px;width:300px;text-align:right;top:477px;">Profile:</div><div class="fld" style="left:680px;top:474px;width:218px;height:17px"></div><div class="t" style="left:683px;top:477px;">default</div><div class="dd" style="left:899px;top:474px;width:17px;height:17px"></div><svg style="position:absolute;left:899px;top:474px;" width="17" height="16" viewBox="0 0 17 16"><rect x="5" y="5" width="7" height="1.2" fill="#000"/><path d="M7.3 7.2h2.4v2.3h2.3l-3.5 3.6-3.5-3.6h2.3z" fill="#000"/></svg>
<div class="a" style="left:603px;top:497px;width:313px;height:1px;background:#a0a0a0;"></div>
<div class="a" style="left:603px;top:498px;width:313px;height:1px;background:#ffffff;"></div>
<div class="t tr" style="left:375px;width:300px;text-align:right;top:508px;">Certificate:</div><div class="fld" style="left:680px;top:505px;width:218px;height:17px"></div><div class="t" style="left:683px;top:508px;">none</div><div class="dd" style="left:899px;top:505px;width:17px;height:17px"></div><svg style="position:absolute;left:899px;top:505px;" width="17" height="16" viewBox="0 0 17 16"><rect x="5" y="5" width="7" height="1.2" fill="#000"/><path d="M7.3 7.2h2.4v2.3h2.3l-3.5 3.6-3.5-3.6h2.3z" fill="#000"/></svg>
<div class="a" style="left:680px;top:531px;width:12px;height:12px;background:#fff;border:1px solid #a0a0a0"></div>
<div class="t" style="left:696px;top:531px;">Verify Server Certificate</div>
<div class="t tr" style="left:375px;width:300px;text-align:right;top:554px;">Auth.:</div><div class="fld" style="left:680px;top:551px;width:218px;height:17px"></div><div class="t" style="left:683px;top:554px;">sha1</div><div class="dd" style="left:899px;top:551px;width:17px;height:17px"></div><svg style="position:absolute;left:899px;top:551px;" width="17" height="16" viewBox="0 0 17 16"><rect x="5" y="5" width="7" height="1.2" fill="#000"/><path d="M7.3 7.2h2.4v2.3h2.3l-3.5 3.6-3.5-3.6h2.3z" fill="#000"/></svg>
<div class="t tr" style="left:375px;width:300px;text-align:right;top:577px;">Cipher:</div><div class="fld" style="left:680px;top:574px;width:218px;height:17px"></div><div class="t" style="left:683px;top:577px;">aes 128</div><div class="dd" style="left:899px;top:574px;width:17px;height:17px"></div><svg style="position:absolute;left:899px;top:574px;" width="17" height="16" viewBox="0 0 17 16"><rect x="5" y="5" width="7" height="1.2" fill="#000"/><path d="M7.3 7.2h2.4v2.3h2.3l-3.5 3.6-3.5-3.6h2.3z" fill="#000"/></svg>
<div class="a" style="left:921px;top:350px;width:16px;height:262px;background:#a0a0a0;"></div>
<div class="a" style="left:922px;top:351px;width:14px;height:260px;background:#f0f0f0;"></div>
<div class="a" style="left:921px;top:365px;width:16px;height:1px;background:#a0a0a0;"></div>
<div class="a" style="left:922px;top:366px;width:14px;height:191px;background:#f0f0f0;"></div>
<div class="a" style="left:921px;top:557px;width:16px;height:1px;background:#a0a0a0;"></div>
<div class="a" style="left:922px;top:558px;width:14px;height:38px;background:#d6d6d6;"></div>
<div class="a" style="left:921px;top:596px;width:16px;height:1px;background:#a0a0a0;"></div>
<svg style="position:absolute;left:922px;top:351px;" width="14" height="14" viewBox="0 0 14 14"><path d="M7 3L11.5 7.5H9V10H5V7.5H2.5z" fill="#000"/></svg>
<svg style="position:absolute;left:922px;top:597px;" width="14" height="14" viewBox="0 0 14 14"><path d="M7 11L11.5 6.5H9V4H5V6.5H2.5z" fill="#000"/></svg>
<div class="btn" style="left:954px;top:322px;width:82px;height:23px;border-color:#000"><div class="bt" style="top:5px">OK</div></div>
<div class="btn" style="left:954px;top:348px;width:82px;height:23px;border-color:#adadad"><div class="bt" style="top:5px">Cancel</div></div>
<div class="btn" style="left:954px;top:374px;width:82px;height:23px;border-color:#adadad"><div class="bt" style="top:5px">Apply</div></div>
<div class="btn" style="left:954px;top:405px;width:82px;height:23px;border-color:#adadad"><div class="bt" style="top:5px">Disable</div></div>
<div class="btn" style="left:954px;top:431px;width:82px;height:23px;border-color:#adadad"><div class="bt" style="top:5px">Comment</div></div>
<div class="btn" style="left:954px;top:457px;width:82px;height:23px;border-color:#adadad"><div class="bt" style="top:5px">Copy</div></div>
<div class="btn" style="left:954px;top:483px;width:82px;height:23px;border-color:#adadad"><div class="bt" style="top:5px">Remove</div></div>
<div class="btn" style="left:954px;top:509px;width:82px;height:23px;border-color:#adadad"><div class="bt" style="top:5px">Torch</div></div>
<div class="a" style="left:595px;top:620px;width:446px;height:21px;background:#f0f0f0;"></div>
<div class="a" style="left:595px;top:621px;width:103px;height:19px;border-left:1px solid #a0a0a0;border-top:1px solid #a0a0a0;border-right:1px solid #fff;border-bottom:1px solid #fff"></div>
<div class="t" style="left:598px;top:625px;color:#000">enabled</div>
<div class="a" style="left:701px;top:621px;width:103px;height:19px;border-left:1px solid #a0a0a0;border-top:1px solid #a0a0a0;border-right:1px solid #fff;border-bottom:1px solid #fff"></div>
<div class="t" style="left:704px;top:625px;color:#000">running</div>
<div class="a" style="left:807px;top:621px;width:103px;height:19px;border-left:1px solid #a0a0a0;border-top:1px solid #a0a0a0;border-right:1px solid #fff;border-bottom:1px solid #fff"></div>
<div class="t" style="left:810px;top:625px;color:#a0a0a0">slave</div>
<div class="a" style="left:913px;top:621px;width:127px;height:19px;border-left:1px solid #a0a0a0;border-top:1px solid #a0a0a0;border-right:1px solid #fff;border-bottom:1px solid #fff"></div>
<div class="t" style="left:916px;top:625px;color:#000">Status: connected</div>
<div class="red" style="left:21px;top:97px;width:120px;height:32px"></div>
<div class="red" style="left:195px;top:143px;width:63px;height:35px"></div>
<div class="red" style="left:199px;top:212px;width:827px;height:48px"></div>
<div class="red" style="left:583px;top:285px;width:473px;height:372px"></div>
<div class="a" style="left:910px;top:619px;width:101px;height:24px;border:3px dashed #ff0000"></div>
<div class="badge" style="left:146px;top:58px">1</div>
<div class="badge" style="left:260px;top:104px">2</div>
<div class="badge" style="left:1027px;top:173px">3</div>
</body></html>
